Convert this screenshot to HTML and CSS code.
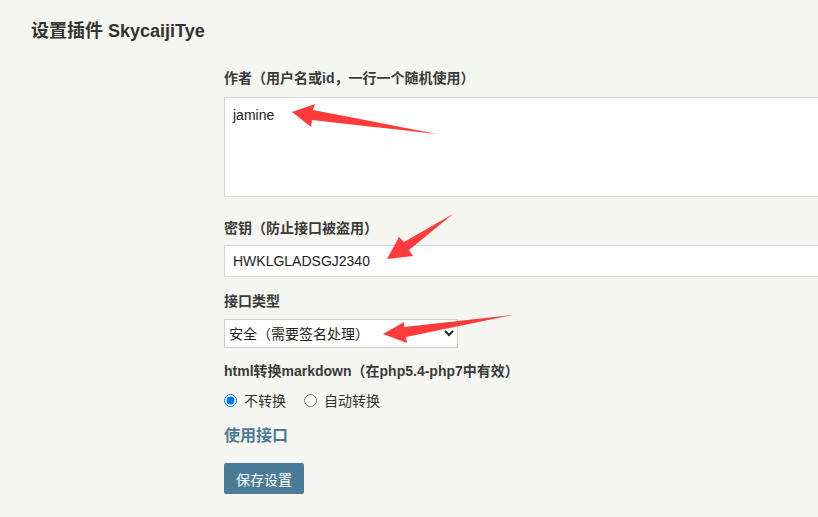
FILE: index.html
```html
<!DOCTYPE html>
<html lang="zh-CN">
<head>
    <meta charset="UTF-8">
    <meta name="viewport" content="width=device-width, initial-scale=1.0">
    <title>设置插件 SkycaijiTye</title>
    <link rel="stylesheet" href="styles.css">
</head>
<body>
    <div class="page">
        <h2 class="page-title">设置插件 SkycaijiTye</h2>

        <form class="plugin-form">
            <div class="field field-author">
                <label class="field-label" for="author">作者（用户名或id，一行一个随机使用）</label>
                <textarea id="author" class="control control-area">jamine</textarea>
            </div>
            <div class="field field-key">
                <label class="field-label" for="apiKey">密钥（防止接口被盗用）</label>
                <input type="text" id="apiKey" class="control control-text" value="HWKLGLADSGJ2340">
            </div>
            <div class="field field-type">
                <label class="field-label" for="apiType">接口类型</label>
                <select id="apiType" class="control control-select">
                    <option>安全（需要签名处理）</option>
                    <option>普通</option>
                </select>
            </div>
            <div class="field field-md">
                <div class="field-label">html转换markdown（在php5.4-php7中有效）</div>
                <div class="radio-row">
                    <label class="radio"><input type="radio" name="md" checked> 不转换</label>
                    <label class="radio"><input type="radio" name="md"> 自动转换</label>
                </div>
            </div>
            <h3 class="section-title">使用接口</h3>
            <button type="button" class="btn-save">保存设置</button>
        </form>
    </div>

    <!-- annotation arrows -->
    <svg class="marks" width="818" height="517" viewBox="0 0 818 517">
        <polygon points="292,112 315,104 313,110 437,134 312,120 311,127" />
        <polygon points="387,259 399,237 404,242 453,214 409,250 413,256" />
        <polygon points="383,334 404,322 404,327 513,315 406,337 407,343" />
    </svg>
</body>
</html>
```

FILE: styles.css
```css
body {
    margin: 0;
    background: #f5f5f1;
    font-family: "Liberation Sans", "Noto Sans CJK SC", sans-serif;
    color: #333;
}
.page {
    padding: 20px 31px;
    overflow: hidden;
}
.page-title {
    margin: 0;
    font-size: 18px;
    line-height: 22px;
    font-weight: bold;
    color: #333;
}
.plugin-form {
    margin: 26px 0 0 193px;
}
.field-label {
    display: block;
    font-size: 14px;
    line-height: 20px;
    font-weight: bold;
    color: #3a3a3a;
    margin-bottom: 8px;
}
.field-author .field-label { margin-bottom: 9px; }
.field-key { margin-top: 21px; }
.field-key .field-label { margin-bottom: 7px; }
.field-type { margin-top: 14px; }
.field-md { margin-top: 13px; }
.field-md .field-label { margin-bottom: 9px; }

.control {
    display: block;
    box-sizing: border-box;
    border: 1px solid #d6d6d6;
    background: #fff;
    font-family: "Liberation Sans", "Noto Sans CJK SC", sans-serif;
    font-size: 14px;
    color: #222;
    border-radius: 0;
}
.control-area {
    width: 640px;
    height: 100px;
    padding: 9px 8px;
    resize: none;
}
.control-text {
    width: 640px;
    height: 32px;
    padding: 0 8px;
}
.control-select {
    width: 234px;
    height: 29px;
    padding: 0;
    border-color: #cfcfcf;
}
.radio-row {
    display: flex;
    gap: 18px;
    height: 20px;
    align-items: center;
}
.radio {
    display: flex;
    align-items: center;
    font-size: 14px;
    color: #333;
}
.radio input {
    margin: 0 7px 0 0;
    width: 13px;
    height: 13px;
}
.section-title {
    margin: 16px 0 17px;
    font-size: 16px;
    line-height: 20px;
    font-weight: bold;
    color: #4a7a94;
}
.btn-save {
    display: block;
    width: 80px;
    height: 31px;
    border: none;
    border-radius: 2px;
    background: #497b96;
    color: #fff;
    font-family: "Liberation Sans", "Noto Sans CJK SC", sans-serif;
    font-size: 14px;
    padding: 0;
}
.marks {
    position: absolute;
    left: 0;
    top: 0;
    pointer-events: none;
}
.marks polygon {
    fill: #ff3b3b;
}
```
